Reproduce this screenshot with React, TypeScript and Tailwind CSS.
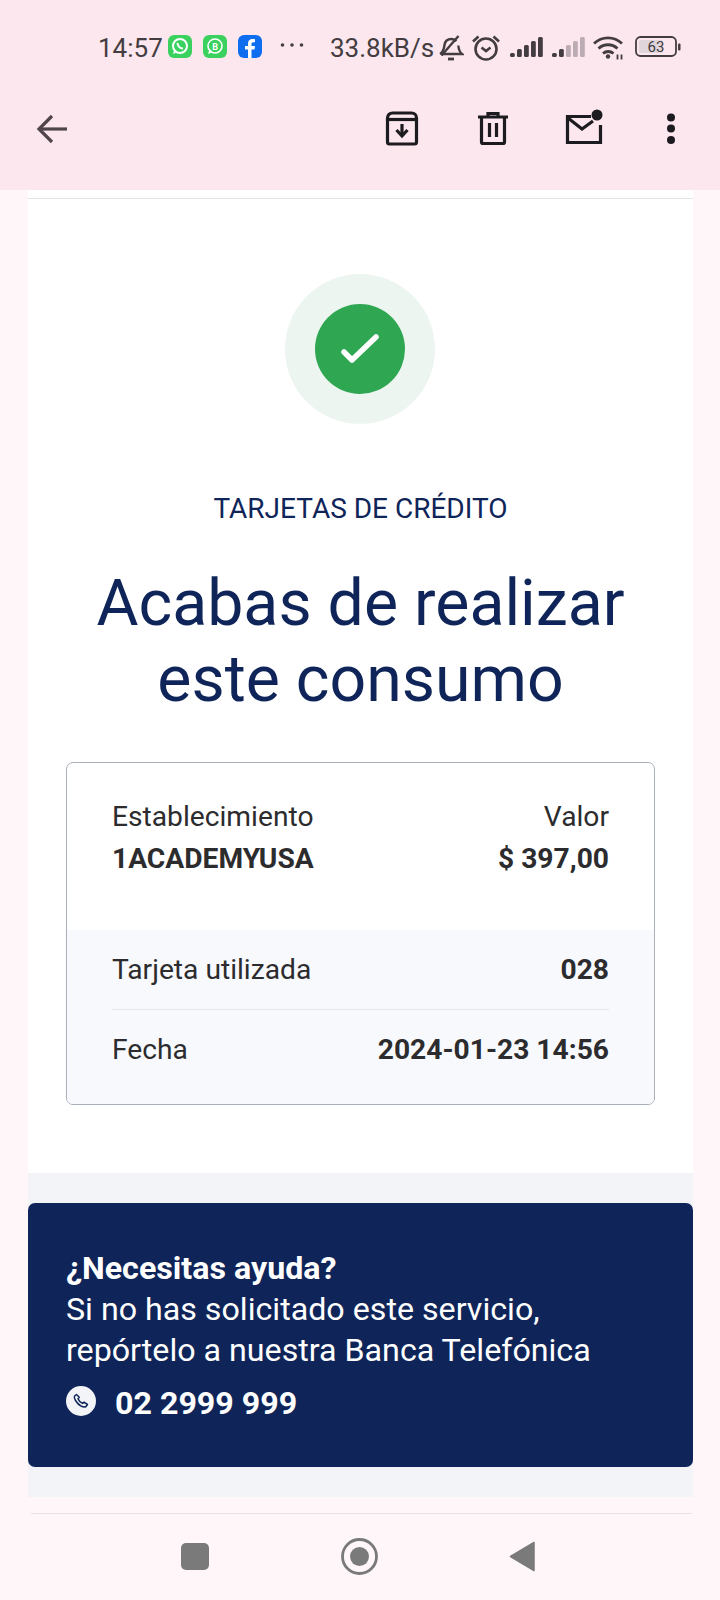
import React from "react";

const font = { fontFamily: "Roboto, sans-serif" };

function AppTile({ color, children }: { color: string; children: React.ReactNode }) {
  return (
    <svg width="24" height="23" viewBox="0 0 24 23" className="shrink-0">
      <rect width="24" height="23" rx="6" fill={color} />
      {children}
    </svg>
  );
}

function Bars({ dim }: { dim: number }) {
  const hs = [4, 8, 12, 16, 20];
  return (
    <svg width="33" height="22" viewBox="0 0 33 22" className="shrink-0">
      {hs.map((h, i) => (
        <rect key={i} x={i * 7} y={21 - h} width="4.800" height={h} rx="1.500" fill="#433c41" opacity={i >= dim ? 0.35 : 1} />
      ))}
    </svg>
  );
}

function Row({ label, value, border }: { label: string; value: string; border?: boolean }) {
  return (
    <div className={`flex items-center justify-between h-[80px] ${border ? "border-b border-[#e3e6ec]" : ""}`}>
      <span>{label}</span>
      <span className="font-bold">{value}</span>
    </div>
  );
}

export default function App() {
  return (
    <div style={font} className="w-[720px] h-[1600px] bg-[#fff6f9] flex flex-col overflow-hidden">
      <header className="h-[190px] shrink-0 bg-[#fce7ee] text-[#433c41]">
        <div className="h-[94px] pt-[34px] pl-[98px] flex items-start">
          <span className="text-[26px] leading-[28px] w-[66px] whitespace-nowrap">14:57</span>
          <div className="flex gap-[11px] ml-[4px] mt-[1px]">
            <AppTile color="#3bd15f">
              <circle cx="12" cy="11" r="7" fill="none" stroke="#fff" strokeWidth="2" />
              <path d="M5 19l1.600-5 3 3z" fill="#fff" />
              <path d="M9.500 8c0 3 2.500 5.500 5.500 5.500" fill="none" stroke="#fff" strokeWidth="2" />
            </AppTile>
            <AppTile color="#3bd15f">
              <circle cx="12" cy="11" r="7" fill="none" stroke="#fff" strokeWidth="1.600" />
              <path d="M5 19l1.600-5 3 3z" fill="#fff" />
              <text x="12" y="14.500" textAnchor="middle" fontSize="9" fontWeight="700" fill="#fff" fontFamily="Roboto">B</text>
            </AppTile>
            <AppTile color="#0f6df0">
              <path d="M13.500 23v-8.500h3l.5-3.500h-3.500V9c0-1 .5-1.700 1.800-1.700H17V4.200c-.5-.1-1.400-.2-2.500-.2-2.700 0-4.500 1.600-4.500 4.600V11H7v3.500h3V23z" fill="#fff" />
            </AppTile>
          </div>
          <svg width="24" height="6" viewBox="0 0 24 6" className="ml-[18px] mt-[8px] shrink-0">
            <circle cx="2.500" cy="3" r="1.800" fill="#433c41" />
            <circle cx="12" cy="3" r="1.800" fill="#433c41" />
            <circle cx="21.500" cy="3" r="1.800" fill="#433c41" />
          </svg>
          <span className="text-[26px] leading-[28px] ml-[26px] w-[108px] whitespace-nowrap">33.8kB/s</span>
          <svg width="26" height="26" viewBox="0 0 26 26" className="shrink-0 mt-[1px]" fill="none" stroke="#433c41" strokeWidth="2.400">
            <path d="M2 19c3.500-2 4-5 4.500-9 .5-3.500 3-6 7-6 2 0 3.800 .8 4.800 2.200" />
            <path d="M20.300 10.500c.4 4 1.200 6.500 3.700 8.500H3" />
            <path d="M3.500 20.500L20.500 1" />
            <path d="M10 24h6" strokeWidth="2.800" />
          </svg>
          <svg width="30" height="27" viewBox="0 0 30 27" className="shrink-0 ml-[7px]" fill="none" stroke="#433c41" strokeWidth="2.600">
            <circle cx="15" cy="15" r="10.500" />
            <path d="M10.500 13.500l4.500 3.500 4.500-3.500" />
            <path d="M2 7.500l5.500-5M28 7.500l-5.500-5" />
          </svg>
          <div className="flex gap-[9px] ml-[9px] mt-[2px]">
            <Bars dim={5} />
            <Bars dim={2} />
          </div>
          <svg width="33" height="25" viewBox="0 0 33 25" className="shrink-0 ml-[7px] mt-[1px]" fill="none" stroke="#433c41" strokeWidth="2.800">
            <path d="M2 8.500c8-7.500 20-7.500 28 0" />
            <path d="M6.500 13.500c5.500-5 13.500-5 19 0" />
            <path d="M11 18.500c3-2.700 7.500-2.700 10.500 0" />
            <circle cx="16" cy="21.500" r="2.200" fill="#433c41" stroke="none" />
            <path d="M25.500 24.500v-5M29.500 24.500v-5" strokeWidth="1.800" />
          </svg>
          <svg width="46" height="22" viewBox="0 0 46 22" className="shrink-0 ml-[10px] mt-[2px]">
            <rect x="1" y="1" width="40" height="19" rx="4.500" fill="none" stroke="#433c41" strokeWidth="1.800" />
            <rect x="4" y="4" width="24" height="13" rx="1.500" fill="#dfd5da" />
            <text x="21" y="16" textAnchor="middle" fontSize="15" fill="#433c41" fontFamily="Roboto">63</text>
            <rect x="43" y="7.500" width="2.500" height="7" rx="1" fill="#433c41" />
          </svg>
        </div>
        <div className="flex items-start h-[96px] pl-[36px] pt-[19px]">
          <svg width="32" height="32" viewBox="0 0 32 32" className="shrink-0" fill="none" stroke="#50454b" strokeWidth="3.200">
            <path d="M31 16H3" />
            <path d="M16 3L3 16l13 13" />
          </svg>
          <svg width="36" height="36" viewBox="0 0 36 36" className="shrink-0 ml-[316px] -mt-[3px]" fill="none" stroke="#1c1b1f" strokeWidth="3.200">
            <path d="M3.500 8a5 5 0 0 1 5-5h19a5 5 0 0 1 5 5v24a2 2 0 0 1-2 2h-25a2 2 0 0 1-2-2z" />
            <path d="M3.500 9.500h29" />
            <path d="M18 14v11" />
            <path d="M12.500 20l5.500 6 5.500-6" />
          </svg>
          <svg width="32" height="36" viewBox="0 0 32 36" className="shrink-0 ml-[57px] -mt-[3px]" fill="none" stroke="#1c1b1f" strokeWidth="3.200">
            <path d="M1 7h30M11 7V3.500h10V7" />
            <path d="M4.500 7v25a1.500 1.500 0 0 0 1.500 1.500h20a1.500 1.500 0 0 0 1.500-1.500V7" />
            <path d="M12.500 13v14M19.500 13v14" />
          </svg>
          <svg width="40" height="36" viewBox="0 0 40 36" className="shrink-0 ml-[55px] -mt-[4px]" fill="none" stroke="#1c1b1f" strokeWidth="3.200">
            <path d="M27 7.500H3.500V33.500H36.500V16" />
            <path d="M4 9l14 11 11-8" />
            <circle cx="33" cy="6" r="5.500" fill="#1c1b1f" stroke="none" />
          </svg>
          <svg width="10" height="34" viewBox="0 0 10 34" className="shrink-0 ml-[62px] -mt-[1px]" fill="#1c1b1f">
            <circle cx="5" cy="5.500" r="4" />
            <circle cx="5" cy="16.500" r="4" />
            <circle cx="5" cy="28" r="4" />
          </svg>
        </div>
      </header>

      <main className="w-[665px] ml-[28px] flex-1 flex flex-col">
        <div className="h-[983px] shrink-0 bg-white">
          <div className="h-[8px] border-b border-[#e2e4e6] box-content" />
          <div className="mt-[75px] ml-[257px] w-[150px] h-[150px] rounded-full bg-[#ecf5ef] flex items-center justify-center">
            <div className="w-[90px] h-[90px] rounded-full bg-[#2fa752] flex items-center justify-center">
              <svg width="40" height="32" viewBox="0 0 40 32" fill="none" stroke="#fff" strokeWidth="5.500" strokeLinecap="round" strokeLinejoin="round">
                <path d="M4 19l8 8L36 4" />
              </svg>
            </div>
          </div>
          <p className="mt-[69px] text-center text-[28px] leading-[32px] text-[#0f2559]">TARJETAS DE CRÉDITO</p>
          <h1 className="mt-[40px] text-center text-[64.400px] leading-[76px] text-[#0f2559]">
            Acabas de realizar
            <br />
            este consumo
          </h1>
          <div className="mt-[45px] mx-[38px] h-[343px] rounded-[7px] border border-[#a9b0bc] overflow-hidden text-[28.200px] leading-[42px] text-[#2c2c2e]">
            <div className="h-[167px] px-[45px] pt-[33px] flex justify-between">
              <div>
                <div>Establecimiento</div>
                <div className="font-bold">1ACADEMYUSA</div>
              </div>
              <div className="text-right">
                <div>Valor</div>
                <div className="font-bold">$ 397,00</div>
              </div>
            </div>
            <div className="h-[176px] bg-[#f8f9fc] px-[45px]">
              <Row label="Tarjeta utilizada" value="028" border />
              <Row label="Fecha" value="2024-01-23 14:56" />
            </div>
          </div>
        </div>
        <div className="h-[324px] shrink-0 bg-[#f2f4f8] pt-[30px]">
          <div className="h-[264px] rounded-[7px] bg-[#0f2559] text-white px-[38px] pt-[45px]">
            <div className="text-[32.200px] leading-[41px] font-bold whitespace-nowrap">¿Necesitas ayuda?</div>
            <div className="text-[32.200px] leading-[41px] whitespace-nowrap">
              Si no has solicitado este servicio,
              <br />
              repórtelo a nuestra Banca Telefónica
            </div>
            <div className="flex items-start mt-[9px]">
              <svg width="30" height="30" viewBox="0 0 30 30" className="shrink-0 mt-[6px]">
                <circle cx="15" cy="15" r="15" fill="#f3f4f8" />
                <path d="M10.500 8.500l-2 1.500c-.5 1.500 0 3 1 4.500 1.500 2.500 3.500 4.500 6 5.800 1.500 .7 3 1 4.500 .2l1.500-2-3.500-2.300-1.500 1.200c-2-1-3.700-2.700-4.500-4.700l1.300-1.500z" fill="none" stroke="#0f2559" strokeWidth="1.500" strokeLinejoin="round" />
              </svg>
              <span className="ml-[19px] mt-[2px] text-[32.200px] leading-[42px] font-bold">02 2999 999</span>
            </div>
          </div>
        </div>
      </main>

      <footer className="h-[87px] shrink-0 ml-[31px] mr-[28px] border-t border-[#e8e4e6] pt-[28px] flex items-start">
        <div className="w-[28px] h-[27px] rounded-[5px] bg-[#7a7a7a] ml-[150px] mt-[1px]" />
        <svg width="37" height="37" viewBox="0 0 37 37" className="shrink-0 ml-[132px] -mt-[4px]">
          <circle cx="18.500" cy="18.500" r="17" fill="none" stroke="#7a7a7a" strokeWidth="2.800" />
          <circle cx="18.500" cy="18.500" r="9.500" fill="#7a7a7a" />
        </svg>
        <svg width="26" height="31" viewBox="0 0 26 31" className="shrink-0 ml-[131px] -mt-[1px]">
          <path d="M25 1.500v28L1.500 15.500z" fill="#7a7a7a" stroke="#7a7a7a" strokeWidth="1.500" strokeLinejoin="round" />
        </svg>
      </footer>
    </div>
  );
}
